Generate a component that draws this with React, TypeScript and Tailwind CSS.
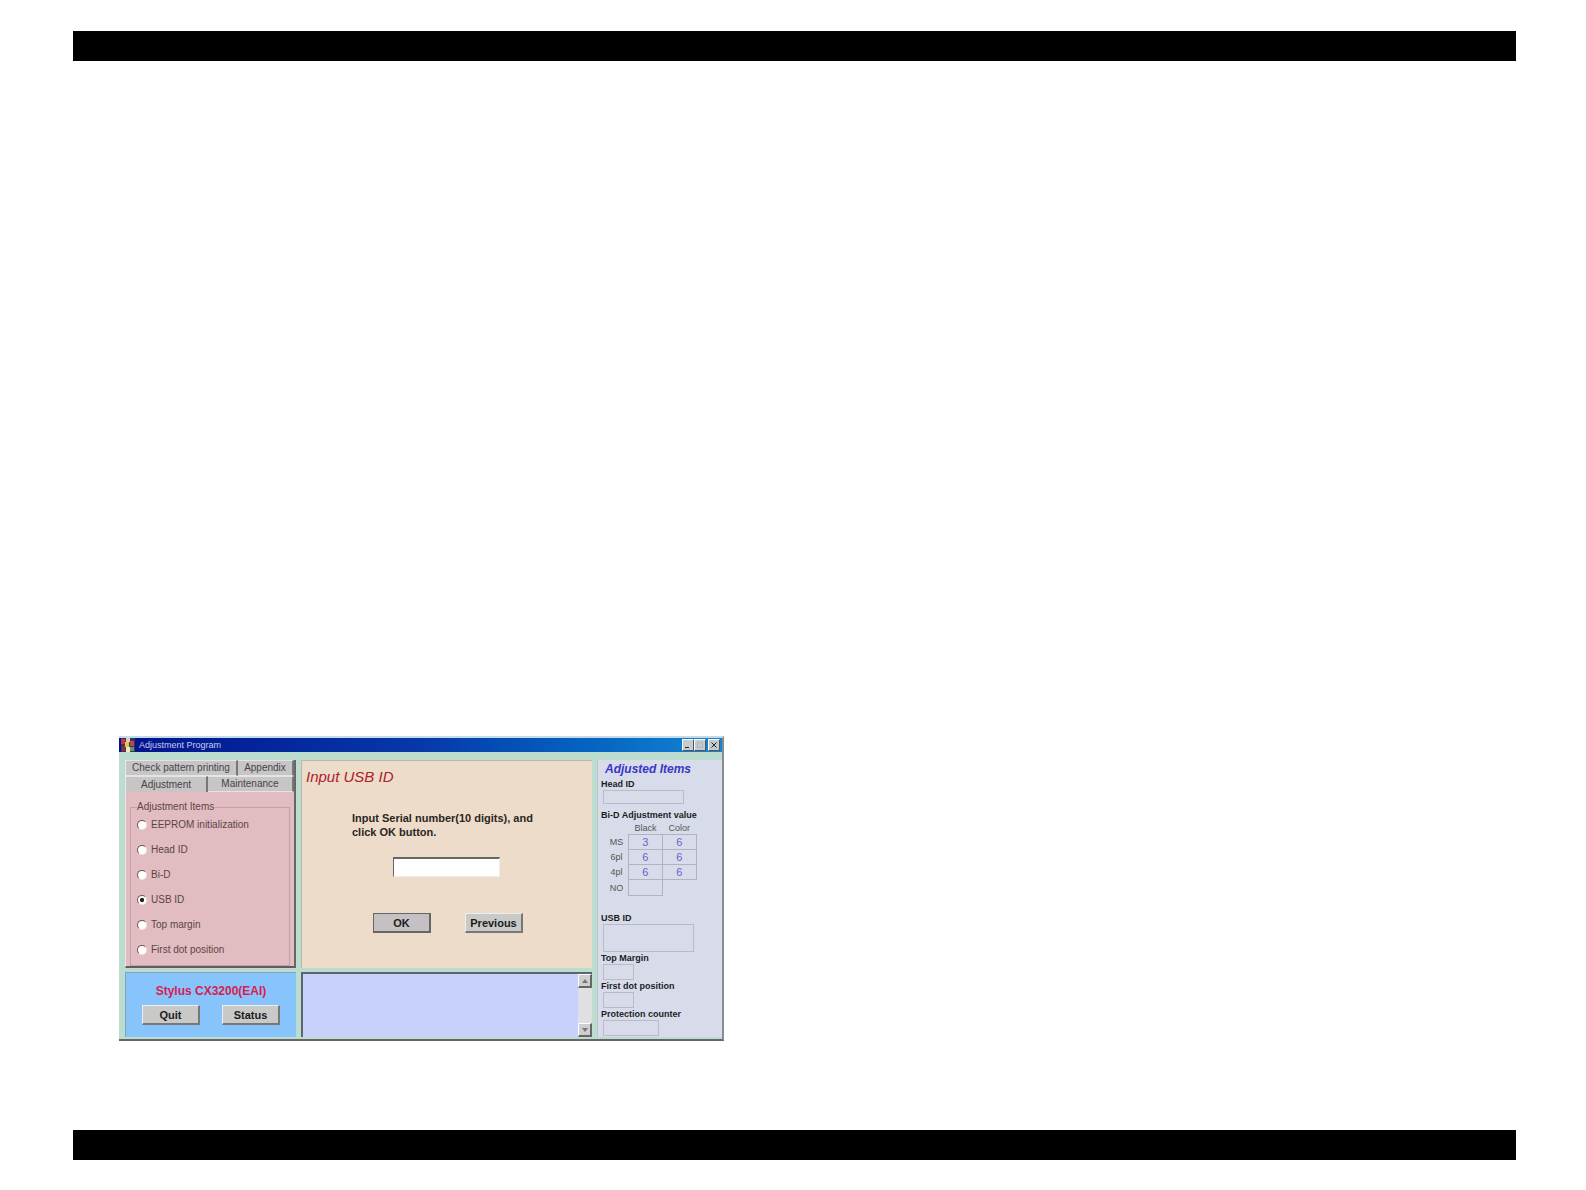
import React, { useState } from "react";
import clsx from "clsx";

const adjustmentItems = [
  "EEPROM initialization",
  "Head ID",
  "Bi-D",
  "USB ID",
  "Top margin",
  "First dot position",
];

const biDRows = [
  { name: "MS", black: "3", color: "6" },
  { name: "6pl", black: "6", color: "6" },
  { name: "4pl", black: "6", color: "6" },
];

function AppIcon() {
  return (
    <svg className="h-3.5 w-3.5" viewBox="0 0 14 14" aria-hidden="true">
      <rect width="14" height="14" fill="#3a3550" />
      <rect x="0" y="1" width="4" height="5" fill="#c8323c" />
      <rect x="5" y="0" width="4" height="4" fill="#d8d0c8" />
      <rect x="4" y="4" width="4" height="5" fill="#e3c74a" />
      <rect x="9" y="3" width="4" height="5" fill="#b84a48" />
      <rect x="1" y="8" width="3" height="5" fill="#8a3040" />
      <rect x="5" y="9" width="4" height="5" fill="#f0e8b8" />
      <rect x="9" y="9" width="4" height="4" fill="#5a9a68" />
    </svg>
  );
}

type CaptionButtonProps = {
  label: string;
  children: React.ReactNode;
};

function CaptionButton({ label, children }: CaptionButtonProps) {
  return (
    <button
      type="button"
      aria-label={label}
      className="flex h-3 w-3 items-center justify-center border border-t-white border-l-white border-r-[#555] border-b-[#555] bg-[#c4ccd0]"
    >
      <svg className="h-2 w-2" viewBox="0 0 8 8" fill="none" stroke="#222">
        {children}
      </svg>
    </button>
  );
}

type PushButtonProps = {
  children: React.ReactNode;
  active?: boolean;
};

function PushButton({ children, active }: PushButtonProps) {
  return (
    <button
      type="button"
      className={clsx(
        "h-5 w-[58px] border border-r-2 border-b-2 text-[11px] leading-4 font-bold text-[#1c1c1c]",
        active
          ? "border-[#666] bg-[#c4c0c4]"
          : "border-t-[#eee] border-l-[#eee] border-r-[#777] border-b-[#777] bg-[#c9c9c7]"
      )}
    >
      {children}
    </button>
  );
}

type TabButtonProps = {
  children: React.ReactNode;
  className: string;
  selected?: boolean;
};

function TabButton({ children, className, selected }: TabButtonProps) {
  return (
    <button
      type="button"
      role="tab"
      aria-selected={!!selected}
      className={clsx(
        "h-4 border-t border-r-2 border-t-[#e4e4e4] border-r-[#777] bg-[#c6c6c6] text-[10px] leading-3 whitespace-nowrap text-[#4a4248]",
        !selected && "border-b border-b-[#e4e4e4]",
        className
      )}
    >
      {children}
    </button>
  );
}

type ReadoutProps = {
  id: string;
  label: string;
  className: string;
};

function Readout({ id, label, className }: ReadoutProps) {
  return (
    <div className="flex flex-col">
      <label htmlFor={id} className="h-3 text-[9px] leading-3 font-bold whitespace-nowrap">
        {label}
      </label>
      <output id={id} className={clsx("ml-0.5 block border border-[#b9bcc8]", className)} />
    </div>
  );
}

function AdjustmentTabs() {
  const [item, setItem] = useState("USB ID");

  return (
    <section className="flex flex-col border-r-2 border-b-2 border-l border-l-[#e8e8e8] border-r-[#666] border-b-[#665a5e] bg-[#e1bcc0]">
      <div role="tablist" className="flex flex-col">
        <div className="flex">
          <TabButton className="w-28">Check pattern printing</TabButton>
          <TabButton className="flex-1">Appendix</TabButton>
        </div>
        <div className="flex">
          <TabButton className="w-[82px]" selected>
            Adjustment
          </TabButton>
          <TabButton className="flex-1">Maintenance</TabButton>
        </div>
      </div>
      <fieldset className="mx-1 mt-2 flex-1 border border-[#c6a2a8] px-1.5">
        <legend className="text-[10px] leading-3.5 text-[#5c4449]">Adjustment Items</legend>
        <div className="flex flex-col gap-[11px] pt-1">
          {adjustmentItems.map((name) => (
            <label key={name} className="flex h-3.5 items-center gap-1 text-[10px] leading-3.5 whitespace-nowrap text-[#5c4449]">
              <input
                type="radio"
                name="item"
                checked={item === name}
                onChange={() => setItem(name)}
                className="h-2.5 w-2.5 appearance-none rounded-full border border-t-[#6d5257] border-l-[#6d5257] border-r-[#f4dfe0] border-b-[#f4dfe0] bg-white checked:bg-[radial-gradient(circle,#222_35%,white_40%)]"
              />
              {name}
            </label>
          ))}
        </div>
      </fieldset>
    </section>
  );
}

function InputPanel() {
  return (
    <section className="flex flex-col border-t border-l border-[#b9b9a8] bg-[#ecdcc9] px-1 pt-1.5">
      <h1 className="text-[15px] leading-5 text-[#b0202c] italic">Input USB ID</h1>
      <label htmlFor="serial" className="mt-6 ml-[46px] text-[11px] leading-3.5 font-bold text-[#2a2622]">
        Input Serial number(10 digits), and
        <br />
        click OK button.
      </label>
      <input
        id="serial"
        type="text"
        className="mt-[18px] ml-[87px] h-5 w-[107px] border border-t-2 border-t-[#666] border-l-[#666] border-r-[#eee] border-b-[#eee] bg-white px-1 text-[11px] outline-none"
      />
      <div className="mt-9 ml-[67px] flex gap-[34px]">
        <PushButton active>OK</PushButton>
        <PushButton>Previous</PushButton>
      </div>
    </section>
  );
}

function ScrollButton({ label, d }: { label: string; d: string }) {
  return (
    <button
      type="button"
      aria-label={label}
      className="flex h-3.5 w-3.5 items-center justify-center border border-r-2 border-b-2 border-t-white border-l-white border-r-[#666] border-b-[#666] bg-[#cfcfcf]"
    >
      <svg className="h-1.5 w-1.5" viewBox="0 0 6 6">
        <path d={d} fill="#777" />
      </svg>
    </button>
  );
}

function AdjustedItems() {
  return (
    <aside className="flex flex-col border-l border-[#bcc4cc] bg-[#d8dcea] pl-[3px] text-[#1c1c24]">
      <h2 className="pl-1 text-[12px] leading-4.5 font-bold whitespace-nowrap text-[#3838c4] italic">
        Adjusted Items
      </h2>
      <Readout id="head-id" label="Head ID" className="h-3.5 w-[81px]" />
      <table className="mt-1 w-[90px] table-fixed border-collapse self-start">
        <caption className="h-3.5 text-left text-[9px] leading-3.5 font-bold whitespace-nowrap">
          Bi-D Adjustment value
        </caption>
        <thead>
          <tr className="text-[9px] leading-3 text-[#555]">
            <td className="w-[26px]" />
            <th className="w-8 font-normal">Black</th>
            <th className="w-8 font-normal">Color</th>
          </tr>
        </thead>
        <tbody className="text-[9px] leading-3.5">
          {biDRows.map((row) => (
            <tr key={row.name}>
              <th className="pl-1 font-normal text-[#555]">{row.name}</th>
              <td className="border border-[#b0b3c0] text-center text-[11px] text-[#6464c8]">{row.black}</td>
              <td className="border border-[#b0b3c0] text-center text-[11px] text-[#6464c8]">{row.color}</td>
            </tr>
          ))}
          <tr className="h-4">
            <th className="pl-1 font-normal text-[#555]">NO</th>
            <td className="border border-[#b0b3c0]" />
          </tr>
        </tbody>
      </table>
      <div className="mt-4 flex flex-col">
        <Readout id="usb-id" label="USB ID" className="h-7 w-[91px]" />
        <Readout id="top-margin" label="Top Margin" className="h-4 w-[31px]" />
        <Readout id="first-dot" label="First dot position" className="h-4 w-[31px]" />
        <Readout id="protection" label="Protection counter" className="h-4 w-14" />
      </div>
    </aside>
  );
}

function AdjustmentWindow() {
  return (
    <div className="flex w-full max-w-[605px] flex-col border-r-2 border-b-2 border-t-2 border-t-[#c4dcea] border-r-[#888e90] border-b-[#666] bg-[#bcdcd0]">
      <header className="flex h-3.5 items-center bg-linear-to-r from-[#04108c] via-[#0838a8] to-[#1484d4] px-0.5">
        <AppIcon />
        <span className="ml-1 flex-1 text-[9px] leading-3.5 text-[#c4ccf0]">Adjustment Program</span>
        <div className="flex">
          <CaptionButton label="Minimize">
            <path d="M1 6.5h4" />
          </CaptionButton>
          <CaptionButton label="Maximize">
            <path d="M1.5 1.5h5v5h-5z" stroke="#b0b4b8" />
          </CaptionButton>
          <span className="ml-0.5">
            <CaptionButton label="Close">
              <path d="M1.5 1.5l5 5M6.5 1.5l-5 5" />
            </CaptionButton>
          </span>
        </div>
      </header>
      <main className="grid grid-cols-[171px_1fr_125px] gap-x-[5px] pt-2 pb-0.5 pl-1.5">
        <div className="grid grid-rows-[208px_65px] gap-y-1">
          <AdjustmentTabs />
          <section className="flex flex-col items-center border-t border-l border-[#7aa4c4] bg-[#88c4fc] pt-2.5">
            <p className="text-[12px] leading-4 font-bold whitespace-nowrap text-[#d81c50]">Stylus CX3200(EAI)</p>
            <div className="mt-1.5 flex gap-[22px]">
              <PushButton>Quit</PushButton>
              <PushButton>Status</PushButton>
            </div>
          </section>
        </div>
        <div className="grid grid-rows-[208px_65px] gap-y-1">
          <InputPanel />
          <section className="flex border-t-2 border-l-2 border-[#5c6470] bg-[#c8d0fc]">
            <textarea aria-label="Messages" readOnly className="min-w-0 flex-1 resize-none bg-transparent outline-none" />
            <div className="flex flex-col justify-between bg-[#e0e0e2]">
              <ScrollButton label="Scroll up" d="M3 1l3 4H0z" />
              <ScrollButton label="Scroll down" d="M3 5L0 1h6z" />
            </div>
          </section>
        </div>
        <AdjustedItems />
      </main>
    </div>
  );
}

export default function App() {
  return (
    <div className="flex min-h-screen flex-col bg-white py-[30px] pr-[70px] pl-[73px] font-['Liberation_Sans',Arial,sans-serif]">
      <div className="mt-px h-[30px] bg-black" />
      <div className="mt-auto mb-[89px] pl-[46px]">
        <AdjustmentWindow />
      </div>
      <div className="h-[30px] bg-black" />
    </div>
  );
}
